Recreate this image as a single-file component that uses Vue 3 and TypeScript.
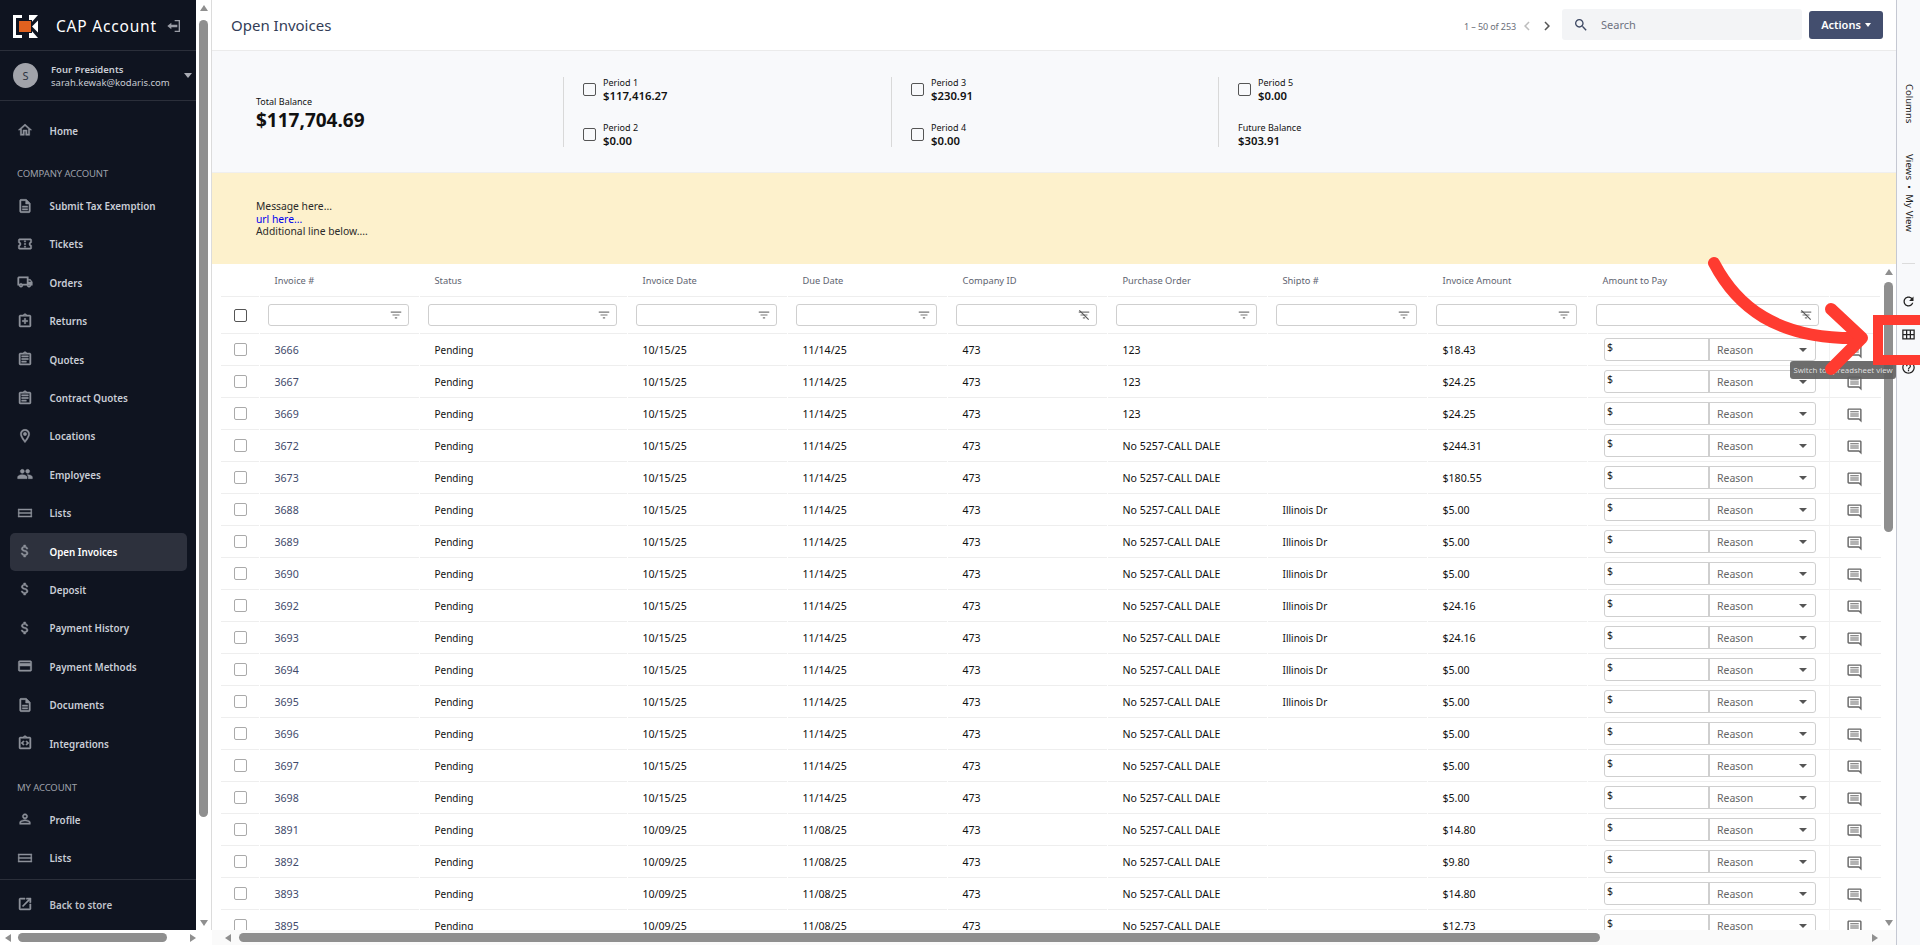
<script setup lang="ts">
const frame = 'M19 3h-4.18C14.4 1.84 13.3 1 12 1c-1.3 0-2.4.84-2.82 2H5c-1.1 0-2 .9-2 2v14c0 1.1.9 2 2 2h14c1.1 0 2-.9 2-2V5c0-1.1-.9-2-2-2zm-7-.25c.41 0 .75.34.75.75s-.34.75-.75.75-.75-.34-.75-.75.34-.75.75-.75zM19 19H5V5h14v14z'
const icons: Record<string, string> = {
  home: 'M12 5.69l5 4.5V18h-2v-6H9v6H7v-7.81l5-4.5M12 3L2 12h3v8h6v-6h2v6h6v-8h3L12 3z',
  doc: 'M8 16h8v2H8zm0-4h8v2H8zm6-10H6c-1.1 0-2 .9-2 2v16c0 1.1.89 2 1.99 2H18c1.1 0 2-.9 2-2V8l-6-6zm4 18H6V4h7v5h5v11z',
  ticket: 'M22 10V6c0-1.11-.9-2-2-2H4c-1.1 0-1.99.89-1.99 2v4c1.1 0 1.99.9 1.99 2s-.89 2-2 2v4c0 1.1.9 2 2 2h16c1.1 0 2-.9 2-2v-4c-1.1 0-2-.9-2-2s.9-2 2-2zm-2-1.46c-1.19.69-2 1.99-2 3.46s.81 2.77 2 3.46V18H4v-2.54c1.19-.69 2-1.99 2-3.46 0-1.48-.8-2.77-1.99-3.46L4 6h16v2.54zM11 15h2v2h-2zm0-4h2v2h-2zm0-4h2v2h-2z',
  truck: 'M20 8h-3V4H3c-1.1 0-2 .9-2 2v11h2c0 1.66 1.34 3 3 3s3-1.34 3-3h6c0 1.66 1.34 3 3 3s3-1.34 3-3h2v-5l-3-4zm-.5 1.5l1.96 2.5H17V9.5h2.5zM6 18c-.55 0-1-.45-1-1s.45-1 1-1 1 .45 1 1-.45 1-1 1zm2.22-3c-.55-.61-1.33-1-2.22-1s-1.67.39-2.22 1H3V6h12v9H8.22zM18 18c-.55 0-1-.45-1-1s.45-1 1-1 1 .45 1 1-.45 1-1 1z',
  returns: frame + 'M11 8h2v3h3v2h-3v3h-2v-3H8v-2h3z',
  board: 'M7 15h7v2H7zm0-4h10v2H7zm0-4h10v2H7z' + frame,
  place: 'M12 2C8.13 2 5 5.13 5 9c0 5.25 7 13 7 13s7-7.75 7-13c0-3.87-3.13-7-7-7zM7 9c0-2.76 2.24-5 5-5s5 2.24 5 5c0 2.88-2.88 7.19-5 9.88C9.92 16.21 7 11.85 7 9zM12 6.5a2.5 2.5 0 1 0 0 5 2.5 2.5 0 0 0 0-5z',
  people: 'M16 11c1.66 0 2.99-1.34 2.99-3S17.66 5 16 5c-1.66 0-3 1.34-3 3s1.34 3 3 3zm-8 0c1.66 0 2.99-1.34 2.99-3S9.66 5 8 5C6.34 5 5 6.34 5 8s1.34 3 3 3zm0 2c-2.33 0-7 1.17-7 3.5V19h14v-2.5c0-2.33-4.67-3.5-7-3.5zm8 0c-.29 0-.62.02-.97.05 1.16.84 1.97 1.97 1.97 3.45V19h6v-2.5c0-2.33-4.67-3.5-7-3.5z',
  list: 'M2 6h20v1.600H2zM2 11.200h20v1.600H2zM2 16.400h20V18H2zM2 6h1.200v12H2zM20.800 6H22v12h-1.200z',
  money: 'M11.8 10.9c-2.27-.59-3-1.2-3-2.15 0-1.09 1.01-1.85 2.7-1.85 1.78 0 2.44.85 2.5 2.1h2.21c-.07-1.72-1.12-3.3-3.21-3.81V3h-3v2.16c-1.94.42-3.5 1.68-3.5 3.61 0 2.31 1.91 3.46 4.7 4.13 2.5.6 3 1.48 3 2.41 0 .69-.49 1.79-2.7 1.79-2.06 0-2.87-.92-2.98-2.1h-2.2c.12 2.19 1.76 3.42 3.68 3.83V21h3v-2.15c1.95-.37 3.5-1.5 3.5-3.55 0-2.84-2.43-3.81-4.7-4.4z',
  card: 'M20 4H4c-1.11 0-1.99.89-1.99 2L2 18c0 1.11.89 2 2 2h16c1.11 0 2-.89 2-2V6c0-1.11-.89-2-2-2zm0 14H4v-6h16v6zm0-10H4V6h16v2z',
  integ: frame + 'M9.5 8.5L6 12l3.5 3.5 1.4-1.4L8.800 12l2.100-2.100zm5 0l-1.400 1.400 2.100 2.100-2.100 2.100 1.400 1.400L18 12z',
  person: 'M12 5.900c1.160 0 2.100.94 2.100 2.100s-.94 2.100-2.100 2.100S9.900 9.160 9.900 8s.94-2.100 2.100-2.100m0 9c2.970 0 6.100 1.460 6.100 2.100v1.100H5.900V17c0-.64 3.130-2.100 6.100-2.100M12 4C9.790 4 8 5.790 8 8s1.790 4 4 4 4-1.790 4-4-1.790-4-4-4zm0 9c-2.670 0-8 1.340-8 4v3h16v-3c0-2.660-5.330-4-8-4z',
  open: 'M19 19H5V5h7V3H5c-1.110 0-2 .9-2 2v14c0 1.100.89 2 2 2h14c1.100 0 2-.9 2-2v-7h-2v7zM14 3v2h3.590l-9.830 9.830 1.410 1.410L19 6.410V10h2V3h-7z',
}
const search = 'M15.500 14h-.79l-.28-.27C15.410 12.590 16 11.110 16 9.500 16 5.910 13.090 3 9.500 3S3 5.910 3 9.500 5.910 16 9.500 16c1.610 0 3.090-.59 4.230-1.570l.27.28v.79l5 4.990L20.490 19l-4.990-5zm-6 0C7.010 14 5 11.990 5 9.500S7.010 5 9.500 5 14 7.010 14 9.500 11.990 14 9.500 14z'
const refresh = 'M17.650 6.350C16.200 4.900 14.210 4 12 4c-4.420 0-7.990 3.580-7.990 8s3.570 8 7.990 8c3.730 0 6.840-2.550 7.730-6h-2.080c-.82 2.330-3.040 4-5.650 4-3.310 0-6-2.690-6-6s2.690-6 6-6c1.660 0 3.140.69 4.220 1.780L13 11h7V4l-2.350 2.350z'
const help = 'M11 18h2v-2h-2v2zm1-16C6.480 2 2 6.480 2 12s4.480 10 10 10 10-4.480 10-10S17.520 2 12 2zm0 18c-4.410 0-8-3.590-8-8s3.590-8 8-8 8 3.590 8 8-3.590 8-8 8zm0-14c-2.210 0-4 1.790-4 4h2c0-1.100.9-2 2-2s2 .9 2 2c0 2-3 1.750-3 5h2c0-2.250 3-2.500 3-5 0-2.210-1.790-4-4-4z'
const filterPath = 'M10 18h4v-2h-4v2zM3 6v2h18V6H3zm3 7h12v-2H6v2z'
const chat = 'M20 4v13.170L18.830 16H4V4h16m0-2H4c-1.100 0-2 .9-2 2v12c0 1.100.9 2 2 2h14l4 4V4c0-1.100-.9-2-2-2zM6 12h12v1.500H6zM6 9h12v1.500H6zM6 6h12v1.500H6z'

type Nav = { label: string; icon?: string; active?: boolean; section?: boolean }
const nav: Nav[] = [
  { label: 'Home', icon: 'home' },
  { label: 'COMPANY ACCOUNT', section: true },
  { label: 'Submit Tax Exemption', icon: 'doc' },
  { label: 'Tickets', icon: 'ticket' },
  { label: 'Orders', icon: 'truck' },
  { label: 'Returns', icon: 'returns' },
  { label: 'Quotes', icon: 'board' },
  { label: 'Contract Quotes', icon: 'board' },
  { label: 'Locations', icon: 'place' },
  { label: 'Employees', icon: 'people' },
  { label: 'Lists', icon: 'list' },
  { label: 'Open Invoices', icon: 'money', active: true },
  { label: 'Deposit', icon: 'money' },
  { label: 'Payment History', icon: 'money' },
  { label: 'Payment Methods', icon: 'card' },
  { label: 'Documents', icon: 'doc' },
  { label: 'Integrations', icon: 'integ' },
  { label: 'MY ACCOUNT', section: true },
  { label: 'Profile', icon: 'person' },
  { label: 'Lists', icon: 'list' },
]

const columns = [
  { label: 'Invoice #' },
  { label: 'Status' },
  { label: 'Invoice Date' },
  { label: 'Due Date' },
  { label: 'Company ID', off: true },
  { label: 'Purchase Order' },
  { label: 'Shipto #' },
  { label: 'Invoice Amount' },
  { label: 'Amount to Pay', off: true },
]

const DALE = 'No 5257-CALL DALE'
const ILL = 'Illinois Dr'
const raw: [string, string, string, string, string][] = [
  ['3666', '10/15/25', '123', '', '$18.43'],
  ['3667', '10/15/25', '123', '', '$24.25'],
  ['3669', '10/15/25', '123', '', '$24.25'],
  ['3672', '10/15/25', DALE, '', '$244.31'],
  ['3673', '10/15/25', DALE, '', '$180.55'],
  ['3688', '10/15/25', DALE, ILL, '$5.00'],
  ['3689', '10/15/25', DALE, ILL, '$5.00'],
  ['3690', '10/15/25', DALE, ILL, '$5.00'],
  ['3692', '10/15/25', DALE, ILL, '$24.16'],
  ['3693', '10/15/25', DALE, ILL, '$24.16'],
  ['3694', '10/15/25', DALE, ILL, '$5.00'],
  ['3695', '10/15/25', DALE, ILL, '$5.00'],
  ['3696', '10/15/25', DALE, '', '$5.00'],
  ['3697', '10/15/25', DALE, '', '$5.00'],
  ['3698', '10/15/25', DALE, '', '$5.00'],
  ['3891', '10/09/25', DALE, '', '$14.80'],
  ['3892', '10/09/25', DALE, '', '$9.80'],
  ['3893', '10/09/25', DALE, '', '$14.80'],
  ['3895', '10/09/25', DALE, '', '$12.73'],
]
const rows = raw.map(([id, date, po, ship, amount]) => ({
  id, date, po, ship, amount,
  due: date === '10/15/25' ? '11/14/25' : '11/08/25',
}))
</script>

<template>
  <div class="app">
    <div class="left">
      <div class="left-top">
        <aside class="sidebar">
          <div class="brand">
            <svg class="logo" viewBox="0 0 25 23">
              <path fill="#fff" d="M0 0h9v3H3v17h6v3H0z" />
              <path fill="#fff" d="M16 0h9l-7 8h-2zM16 23h9l-7-8h-2z" />
              <path fill="#fff" d="M19 11.500l6-6v12z" />
              <rect x="5.500" y="5.500" width="13" height="12" fill="#e0611f" stroke="#0f1420" />
            </svg>
            <span class="brand-name">CAP Account</span>
            <svg class="brand-exit" viewBox="0 0 24 24"><path fill="#9a9da6" d="M13 3h8v18h-8v-2h6V5h-6zM2 12l6-5v3h9v4H8v3z" /></svg>
          </div>
          <div class="user">
            <div class="avatar">S</div>
            <div class="user-text">
              <div class="user-name">Four Presidents</div>
              <div class="user-mail">sarah.kewak@kodaris.com</div>
            </div>
            <span class="user-caret"></span>
          </div>
          <nav class="nav">
            <template v-for="(n, i) in nav" :key="i">
              <div v-if="n.section" class="section" :class="{ 'section-my': n.label === 'MY ACCOUNT' }">{{ n.label }}</div>
              <div v-else class="nav-item" :class="{ active: n.active, 'nav-home': n.label === 'Home' }">
                <svg class="nav-icon" viewBox="0 0 24 24"><path :d="icons[n.icon as string]" /></svg>
                <span>{{ n.label }}</span>
              </div>
            </template>
          </nav>
          <div class="back">
            <svg class="nav-icon" viewBox="0 0 24 24"><path :d="icons.open" /></svg>
            <span>Back to store</span>
          </div>
        </aside>
        <div class="vbar side-vbar">
          <span class="tri up"></span>
          <div class="vthumb side-thumb"></div>
          <span class="tri down"></span>
        </div>
      </div>
      <div class="hbar side-hbar">
        <span class="tri lt"></span>
        <div class="hthumb side-hthumb"></div>
        <span class="tri rt"></span>
      </div>
    </div>

    <main class="main">
      <header class="toolbar">
        <h1 class="title">Open Invoices</h1>
        <div class="pager">
          <span>1 – 50 of 253</span>
          <svg class="chev" viewBox="0 0 24 24"><path fill="#bdbdbd" d="M15.410 7.410L14 6l-6 6 6 6 1.410-1.410L10.830 12z" /></svg>
          <svg class="chev" viewBox="0 0 24 24"><path fill="#555" d="M10 6L8.590 7.410 13.170 12l-4.580 4.590L10 18l6-6z" /></svg>
        </div>
        <div class="search">
          <svg class="search-icon" viewBox="0 0 24 24"><path fill="#3d4863" :d="search" /></svg>
          <span>Search</span>
        </div>
        <button class="actions">Actions <span class="caret-w"></span></button>
      </header>

      <section class="summary">
        <div class="total">
          <div class="lab">Total Balance</div>
          <div class="big">$117,704.69</div>
        </div>
        <div class="pcol p1">
          <div class="period"><span class="cb dark"></span><div><div class="lab">Period 1</div><div class="val">$117,416.27</div></div></div>
          <div class="period"><span class="cb dark"></span><div><div class="lab">Period 2</div><div class="val">$0.00</div></div></div>
        </div>
        <div class="pcol p2">
          <div class="period"><span class="cb dark"></span><div><div class="lab">Period 3</div><div class="val">$230.91</div></div></div>
          <div class="period"><span class="cb dark"></span><div><div class="lab">Period 4</div><div class="val">$0.00</div></div></div>
        </div>
        <div class="pcol p3">
          <div class="period"><span class="cb dark"></span><div><div class="lab">Period 5</div><div class="val">$0.00</div></div></div>
          <div class="period future"><div><div class="lab">Future Balance</div><div class="val">$303.91</div></div></div>
        </div>
      </section>

      <section class="banner">
        <div>Message here...</div>
        <a class="link">url here...</a>
        <div>Additional line below....</div>
      </section>

      <div class="table-wrap">
        <div class="table">
          <div class="row head">
            <div class="cell"></div>
            <div v-for="c in columns" :key="c.label" class="cell txt">{{ c.label }}</div>
            <div class="cell"></div>
          </div>
          <div class="row filters">
            <div class="cell cbc"><span class="cb dark"></span></div>
            <div v-for="c in columns" :key="c.label" class="cell fc">
              <div class="finput">
                <svg class="ficon" viewBox="0 0 24 24">
                  <path fill="#777" :d="filterPath" />
                  <path v-if="c.off" d="M4 4l16 16" stroke="#555" stroke-width="2" />
                </svg>
              </div>
            </div>
            <div class="cell"></div>
          </div>
          <div v-for="r in rows" :key="r.id" class="row body">
            <div class="cell cbc"><span class="cb"></span></div>
            <div class="cell txt num idc">{{ r.id }}</div>
            <div class="cell txt">Pending</div>
            <div class="cell txt num">{{ r.date }}</div>
            <div class="cell txt num">{{ r.due }}</div>
            <div class="cell txt num">473</div>
            <div class="cell txt num">{{ r.po }}</div>
            <div class="cell txt">{{ r.ship }}</div>
            <div class="cell txt num">{{ r.amount }}</div>
            <div class="cell pay">
              <div class="pay-group">
                <div class="pay-in">$</div>
                <div class="pay-sel">Reason<span class="caret-g"></span></div>
              </div>
            </div>
            <div class="cell act">
              <svg class="chat" viewBox="0 0 24 24"><path fill="#666" :d="chat" /></svg>
            </div>
          </div>
        </div>
        <div class="vbar main-vbar">
          <span class="tri up"></span>
          <div class="vthumb main-thumb"></div>
          <span class="tri down"></span>
        </div>
      </div>
      <div class="hbar main-hbar">
        <span class="tri lt"></span>
        <div class="hthumb main-hthumb"></div>
        <span class="tri rt"></span>
      </div>
    </main>

    <aside class="rail">
      <div class="vtext columns-t">Columns</div>
      <div class="vtext views-t">Views &nbsp;•&nbsp; My View</div>
      <div class="rail-div"></div>
      <svg class="rail-icon refresh" viewBox="0 0 24 24"><path fill="#222" :d="refresh" /></svg>
      <svg class="rail-icon grid" viewBox="0 0 24 24">
        <path fill="none" stroke="#222" stroke-width="2" d="M3 5h18v14H3zM3 12h18M9 5v14M15 5v14" />
      </svg>
      <svg class="rail-icon help" viewBox="0 0 24 24"><path fill="#222" :d="help" /></svg>
    </aside>

    <div class="tooltip">Switch to spreadsheet view</div>
    <svg class="annot" viewBox="0 0 1920 945">
      <g fill="none" stroke="#ff3b30">
        <rect x="1878" y="320" width="60" height="40" stroke-width="10" />
        <g stroke-width="12" stroke-linecap="round" stroke-linejoin="round">
          <path d="M1714 263C1736 305 1775 340 1860 338" />
          <path d="M1831 309L1862 338L1831 369" />
        </g>
      </g>
    </svg>
  </div>
</template>

<style>
html, body { margin: 0; padding: 0; background: #fff; overflow: hidden; }
</style>

<style scoped>
.app {
  position: relative;
  display: flex;
  width: 1920px;
  height: 945px;
  overflow: hidden;
  font-family: "Noto Sans", "Open Sans", sans-serif;
  font-size: 10px;
  color: #111;
  background: #fff;
}
.left {
  width: 212px;
  flex: none;
  display: flex;
  flex-direction: column;
  border-right: 1px solid #dcdcdc;
  box-sizing: border-box;
}
.left-top { flex: 1; display: flex; min-height: 0; }
.sidebar {
  width: 196px;
  flex: none;
  background: #0f1420;
  color: #d5d8de;
  display: flex;
  flex-direction: column;
  overflow: hidden;
}
.brand {
  height: 51px;
  flex: none;
  box-sizing: border-box;
  display: flex;
  align-items: center;
  padding: 2px 0 0 13px;
  border-bottom: 1px solid #2b2f3a;
}
.logo { width: 25px; height: 23px; flex: none; }
.brand-name { margin-left: 18px; font-size: 15.500px; letter-spacing: .8px; color: #fff; white-space: nowrap; }
.brand-exit { width: 16px; height: 16px; margin-left: 9px; flex: none; }
.user {
  height: 50px;
  flex: none;
  box-sizing: border-box;
  display: flex;
  align-items: center;
  padding-left: 13px;
  border-bottom: 1px solid #2b2f3a;
  position: relative;
}
.avatar {
  width: 25px;
  height: 25px;
  border-radius: 50%;
  background: #a1a3aa;
  color: #2c3140;
  display: flex;
  align-items: center;
  justify-content: center;
  font-size: 11px;
  flex: none;
}
.user-text { margin-left: 13px; margin-top: 2px; font-size: 9.500px; line-height: 12.500px; white-space: nowrap; }
.user-name { font-weight: 600; color: #c9ccd4; }
.user-mail { color: #c9ccd4; }
.user-caret {
  margin-left: 14px;
  border: 4.500px solid transparent;
  border-top: 5px solid #a9acb4;
  border-bottom: 0;
}
.nav { flex: 1; padding-top: 11px; }
.nav-item {
  height: 38.400px;
  display: flex;
  align-items: center;
  position: relative;
  font-size: 9.800px;
  font-weight: 600;
  color: #c9cdd6;
  white-space: nowrap;
  margin: 0 9px 0 10px;
  padding-left: 39.500px;
  border-radius: 5px;
  box-sizing: border-box;
}
.nav-home { margin-bottom: 10px; }
.nav-item.active { background: #2d313d; color: #fff; }
.nav-icon {
  position: absolute;
  left: 7px;
  top: 50%;
  width: 16px;
  height: 16px;
  margin-top: -9px;
  fill: #8e929b;
  stroke: #8e929b;
  stroke-width: .7px;
}
.section {
  height: 27px;
  line-height: 28px;
  padding-left: 17px;
  font-size: 9.500px;
  color: #9ea1aa;
  letter-spacing: -.1px;
}
.section-my { margin-top: 11px; height: 27px; }
.back {
  height: 51px;
  flex: none;
  box-sizing: border-box;
  border-top: 1px solid #2b2f3a;
  display: flex;
  align-items: center;
  position: relative;
  padding-left: 49.500px;
  font-size: 9.800px;
  font-weight: 600;
  color: #c0c3cb;
}
.back .nav-icon { left: 17px; }
.vbar {
  flex: none;
  display: flex;
  flex-direction: column;
  align-items: center;
  position: relative;
}
.side-vbar { width: 15px; background: #fff; }
.vthumb { width: 9px; background: #8f8f8f; border-radius: 5px; }
.side-thumb { height: 797px; margin-top: 9px; margin-left: 0; }
.tri { width: 0; height: 0; display: block; flex: none; }
.tri.up { border: 4.500px solid transparent; border-top: 0; border-bottom: 6px solid #8f8f8f; margin-top: 5px; }
.tri.down { border: 4.500px solid transparent; border-bottom: 0; border-top: 6px solid #8f8f8f; margin-top: auto; margin-bottom: 4px; }
.tri.lt { border: 4.500px solid transparent; border-left: 0; border-right: 6px solid #8f8f8f; }
.tri.rt { border: 4.500px solid transparent; border-right: 0; border-left: 6px solid #8f8f8f; margin-left: auto; }
.hbar {
  height: 15px;
  flex: none;
  display: flex;
  align-items: center;
  background: #fafafa;
}
.hthumb { height: 9px; background: #8f8f8f; border-radius: 5px; }
.side-hbar { padding: 0 20px 0 5px; width: 191px; background: #fff; }
.side-hthumb { width: 149px; margin-left: 7px; }
.main { flex: 1; min-width: 0; display: flex; flex-direction: column; }
.toolbar {
  height: 51px;
  flex: none;
  box-sizing: border-box;
  display: flex;
  align-items: center;
  padding: 0 13px 0 19px;
  border-bottom: 1px solid #ebebeb;
}
.title { margin: 0; font-size: 15px; font-weight: 400; color: #333d57; flex: 1; line-height: 1; }
.pager { display: flex; align-items: center; color: #6a6e78; font-size: 9px; letter-spacing: -.1px; margin-top: 2px; }
.chev { width: 18px; height: 18px; margin-left: 2px; }
.chev + .chev { margin-left: 2px; }
.search {
  width: 240px;
  height: 31px;
  margin-left: 6px;
  margin-top: -1px;
  border-radius: 3px;
  background: #f3f4f6;
  display: flex;
  align-items: center;
  color: #6e7280;
  font-size: 11px;
  box-sizing: border-box;
  padding-left: 11px;
}
.search-icon { width: 16px; height: 16px; margin-right: 12px; }
.actions {
  width: 74px;
  height: 28px;
  margin-left: 7px;
  margin-top: -1px;
  border: 0;
  border-radius: 3px;
  background: #434e6e;
  color: #fff;
  font: 600 11px "Noto Sans", sans-serif;
  display: flex;
  align-items: center;
  justify-content: center;
  gap: 4px;
  padding: 0;
}
.caret-w { border: 3.500px solid transparent; border-top: 4px solid #fff; border-bottom: 0; }
.summary {
  height: 122px;
  flex: none;
  box-sizing: border-box;
  background: #f8f9fb;
  display: grid;
  grid-template-columns: 351px 328px 327px 1fr;
  align-items: center;
  border-bottom: 1px solid #efefef;
}
.total { padding-left: 44px; margin-top: 4px; }
.lab { font-size: 9px; line-height: 12px; color: #111; white-space: nowrap; }
.big { font-size: 19px; font-weight: 700; line-height: 24px; color: #111; }
.val { font-size: 11.300px; font-weight: 600; line-height: 14px; color: #111; }
.pcol {
  height: 70px;
  margin-top: 1px;
  border-left: 1px solid #d9d9d9;
  padding-left: 19px;
  display: flex;
  flex-direction: column;
  justify-content: space-between;
}
.period { display: flex; align-items: center; gap: 7px; height: 27px; }
.period:first-child { margin-top: -1px; }
.period:last-child { margin-bottom: -1px; }
.cb {
  display: block;
  width: 13px;
  height: 13px;
  box-sizing: border-box;
  border: 1px solid #aaa;
  border-radius: 2px;
  background: #fff;
  flex: none;
}
.cb.dark { border-color: #555; background: transparent; }
.banner {
  height: 91px;
  flex: none;
  box-sizing: border-box;
  background: #fdf1cc;
  padding: 27px 0 0 44px;
  font-size: 10.300px;
  line-height: 12.500px;
  color: #2a2a2a;
}
.link { display: block; color: #0000ee; }
.table-wrap { flex: 1; min-height: 0; display: flex; overflow: hidden; }
.table { flex: 1; min-width: 0; overflow: hidden; padding-left: 9px; }
.row {
  display: grid;
  grid-template-columns: 39px 160px 208px 160px 160px 160px 160px 160px 160px 242px 51px;
  box-sizing: border-box;
}
.head { height: 33px; }
.filters { height: 37px; }
.body { height: 32px; }
.cell {
  min-width: 0;
  border-bottom: 1px solid #eeeeee;
  margin-right: 1px;
  display: flex;
  align-items: center;
}
.txt { padding-left: 14.500px; white-space: nowrap; color: #111; }
.head .txt { color: #5e6370; font-size: 9.300px; }
.num { font-size: 10.600px; }
.idc { color: #3f4a6b; }
.cbc { padding-left: 13px; }
.fc { padding: 0 10px 0 8px; }
.finput {
  width: 100%;
  height: 22px;
  box-sizing: border-box;
  border: 1px solid #cfcfcf;
  border-radius: 3px;
  display: flex;
  align-items: center;
  justify-content: flex-end;
  padding-right: 5px;
  background: #fff;
}
.ficon { width: 14px; height: 14px; }
.pay { padding-left: 16px; }
.pay-group {
  width: 212px;
  height: 23px;
  display: flex;
  box-sizing: border-box;
  border: 1px solid #cfcfcf;
  border-radius: 3px;
}
.pay-in {
  width: 105px;
  box-sizing: border-box;
  border-right: 2px solid #cfcfcf;
  padding: 2px 0 0 2px;
  line-height: 13px;
  font-size: 10.500px;
  color: #222;
}
.pay-sel {
  flex: 1;
  display: flex;
  align-items: center;
  justify-content: space-between;
  padding: 0 8px 0 7px;
  color: #666;
  font-size: 10.500px;
}
.caret-g { border: 4px solid transparent; border-top: 4px solid #555; border-bottom: 0; }
.act { border-left: 1px solid #f2f2f2; justify-content: center; padding-right: 2px; margin-left: -1px; margin-right: 0; }
.chat { width: 17px; height: 17px; margin-top: 3px; }
.main-vbar { width: 15px; }
.main-thumb { height: 250px; margin-top: 7px; }
.main-hbar { padding: 0 18px 0 13px; }
.main-hthumb { width: 1361px; margin-left: 8px; }
.rail {
  width: 24px;
  flex: none;
  box-sizing: border-box;
  background: #f8f9fb;
  border-left: 1px solid #c5c8d2;
  display: flex;
  flex-direction: column;
  align-items: center;
}
.vtext {
  writing-mode: vertical-rl;
  font-size: 9.500px;
  line-height: 12px;
  color: #222;
  white-space: nowrap;
}
.columns-t { margin-top: 84px; }
.views-t { margin-top: 31px; letter-spacing: .15px; }
.rail-div { width: 13px; height: 1px; background: #dcdcdc; margin-top: 31px; }
.rail-icon { width: 15px; height: 15px; flex: none; }
.refresh { margin-top: 30px; }
.grid { margin-top: 18px; }
.help { margin-top: 18px; }
.tooltip {
  position: absolute;
  left: 1790px;
  top: 361px;
  width: 106px;
  height: 18px;
  box-sizing: border-box;
  border-radius: 3px;
  background: rgba(97, 97, 97, .92);
  color: #ddd;
  font-size: 7.800px;
  line-height: 18px;
  text-align: center;
  white-space: nowrap;
}
.annot {
  position: absolute;
  left: 0;
  top: 0;
  width: 1920px;
  height: 945px;
  pointer-events: none;
}
</style>
